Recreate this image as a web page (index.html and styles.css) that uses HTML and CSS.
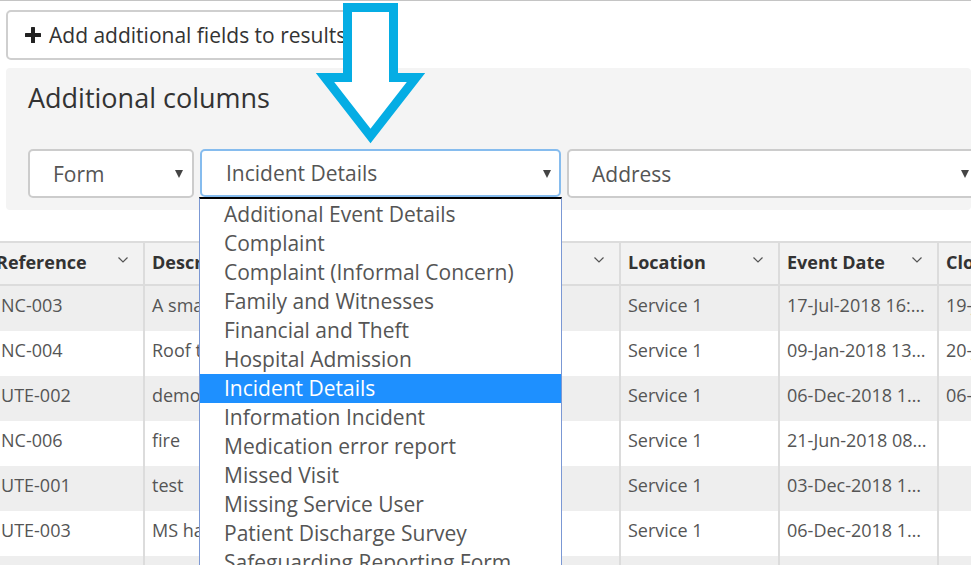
FILE: index.html
```html
<!DOCTYPE html>
<html lang="en">
<head>
<meta charset="utf-8">
<title>Additional columns</title>
<link rel="stylesheet" href="styles.css">
</head>
<body>
<div class="page">
  <div class="toolbar">
    <button class="add-btn" type="button">
      <svg class="plus" width="16" height="16" viewBox="0 0 16 16" aria-hidden="true"><rect x="6" y="0" width="4" height="16" rx="0.5"/><rect x="0" y="6" width="16" height="4" rx="0.5"/></svg>
      <span>Add additional fields to results</span>
    </button>
  </div>

  <section class="columns-panel">
    <h2 class="panel-title">Additional columns</h2>
    <div class="selects">
      <div class="select select-form"><span class="select-label">Form</span><span class="caret"></span></div>
      <div class="select-wrap">
        <div class="select select-focused"><span class="select-label">Incident Details</span><span class="caret"></span></div>
        <ul class="dropdown">
          <li>Additional Event Details</li>
          <li>Complaint</li>
          <li>Complaint (Informal Concern)</li>
          <li>Family and Witnesses</li>
          <li>Financial and Theft</li>
          <li>Hospital Admission</li>
          <li class="selected">Incident Details</li>
          <li>Information Incident</li>
          <li>Medication error report</li>
          <li>Missed Visit</li>
          <li>Missing Service User</li>
          <li>Patient Discharge Survey</li>
          <li>Safeguarding Reporting Form</li>
          <li>Staff Injury</li>
        </ul>
      </div>
      <div class="select select-address"><span class="select-label">Address</span><span class="caret"></span></div>
    </div>
  </section>

  <table class="results">
    <colgroup>
      <col class="col-ref">
      <col class="col-std">
      <col class="col-std">
      <col class="col-narrow">
      <col class="col-std">
      <col class="col-std">
      <col class="col-std">
    </colgroup>
    <thead>
      <tr>
        <th><div class="th-inner"><span class="th-label">Reference</span><svg class="chev" width="10" height="6" viewBox="0 0 10 6"><polyline points="0.5,0.5 5,5 9.5,0.5"/></svg></div></th>
        <th><div class="th-inner"><span class="th-label">Description</span><svg class="chev" width="10" height="6" viewBox="0 0 10 6"><polyline points="0.5,0.5 5,5 9.5,0.5"/></svg></div></th>
        <th><div class="th-inner"><span class="th-label">Type</span><svg class="chev" width="10" height="6" viewBox="0 0 10 6"><polyline points="0.5,0.5 5,5 9.5,0.5"/></svg></div></th>
        <th><div class="th-inner"><span class="th-label">Status</span><svg class="chev" width="10" height="6" viewBox="0 0 10 6"><polyline points="0.5,0.5 5,5 9.5,0.5"/></svg></div></th>
        <th><div class="th-inner"><span class="th-label">Location</span><svg class="chev" width="10" height="6" viewBox="0 0 10 6"><polyline points="0.5,0.5 5,5 9.5,0.5"/></svg></div></th>
        <th><div class="th-inner"><span class="th-label">Event Date</span><svg class="chev" width="10" height="6" viewBox="0 0 10 6"><polyline points="0.5,0.5 5,5 9.5,0.5"/></svg></div></th>
        <th><div class="th-inner"><span class="th-label">Closed Date</span><svg class="chev" width="10" height="6" viewBox="0 0 10 6"><polyline points="0.5,0.5 5,5 9.5,0.5"/></svg></div></th>
      </tr>
    </thead>
    <tbody>
      <tr><td>INC-003</td><td>A small fire in the kitchen</td><td>Fire</td><td>Open</td><td>Service 1</td><td>17-Jul-2018 16:45</td><td>19-Jul-2018</td></tr>
      <tr><td>INC-004</td><td>Roof tiles fell off</td><td>Damage</td><td>Open</td><td>Service 1</td><td>09-Jan-2018 13:20</td><td>20-Jan-2018</td></tr>
      <tr><td>IUTE-002</td><td>demo</td><td>Fall</td><td>Open</td><td>Service 1</td><td>06-Dec-2018 10:15</td><td>06-Dec-2018</td></tr>
      <tr><td>INC-006</td><td>fire</td><td>Fire</td><td>Open</td><td>Service 1</td><td>21-Jun-2018 08:30</td><td></td></tr>
      <tr><td>IUTE-001</td><td>test</td><td>Other</td><td>Open</td><td>Service 1</td><td>03-Dec-2018 11:00</td><td></td></tr>
      <tr><td>IUTE-003</td><td>MS had a fall</td><td>Fall</td><td>Open</td><td>Service 1</td><td>06-Dec-2018 14:22</td><td></td></tr>
      <tr><td>INC-007</td><td>test</td><td>Other</td><td>Open</td><td>Service 1</td><td>07-Dec-2018 09:10</td><td></td></tr>
    </tbody>
  </table>

  <svg class="pointer-arrow" width="140" height="150" viewBox="0 0 140 150" aria-hidden="true">
    <polygon points="47.5,6.5 93.5,6.5 93.5,76.5 116,76.5 70.5,135 25,76.5 47.5,76.5"/>
  </svg>
</div>
</body>
</html>
```

FILE: styles.css
```css
html, body {
  margin: 0;
  padding: 0;
  height: 565px;
  overflow: hidden;
  background: #fff;
}

body {
  font-family: "Open Sans", "Noto Sans", sans-serif;
  color: #333;
}

.page {
  position: relative;
  height: 565px;
  overflow: hidden;
  border-top: 1px solid #c4c4c4;
  box-sizing: border-box;
}

.toolbar {
  padding: 9px 0 0 6px;
}

.add-btn {
  display: flex;
  align-items: center;
  gap: 8px;
  height: 50px;
  box-sizing: border-box;
  padding: 0 18px 0 17px;
  background: #fff;
  border: 2px solid #cfcfcf;
  border-radius: 5px;
  font-family: "Open Sans", "Noto Sans", sans-serif;
  font-size: 21px;
  color: #333;
  cursor: pointer;
}

.plus {
  fill: #222;
  flex: none;
}

.columns-panel {
  margin: 8px 0 0 6px;
  padding: 12px 0 12px 22px;
  background: #f4f4f4;
  border-radius: 4px;
}

.panel-title {
  margin: 0 0 33px 0;
  font-size: 27px;
  line-height: 36px;
  font-weight: 400;
  color: #333;
}

.selects {
  display: flex;
  gap: 6px;
}

.select {
  flex: none;
  display: flex;
  align-items: center;
  height: 49px;
  box-sizing: border-box;
  padding: 0 9px 0 23px;
  background: #fff;
  border: 2px solid #cccccc;
  border-radius: 5px;
  font-size: 21px;
  color: #555;
}

.select-label {
  flex: 1;
  white-space: nowrap;
}

.caret {
  width: 0;
  height: 0;
  border-left: 4.5px solid transparent;
  border-right: 4.5px solid transparent;
  border-top: 8px solid #444;
  margin-top: 1px;
}

.select-form {
  width: 166px;
}

.select-wrap {
  flex: none;
  position: relative;
  width: 361px;
}

.select-focused {
  width: 361px;
  height: 48px;
  padding-left: 24px;
  padding-right: 8px;
  border-color: #86bcee;
}

.select-address {
  width: 413px;
}

.dropdown {
  position: absolute;
  z-index: 5;
  left: -1px;
  top: 48px;
  width: 363px;
  box-sizing: border-box;
  margin: 0;
  padding: 1px 0 0 0;
  list-style: none;
  background: #fff;
  border-top: 2px solid #000;
  border-left: 1px solid #7b98d4;
  border-right: 1px solid #7b98d4;
}

.dropdown li {
  height: 29px;
  line-height: 29px;
  padding-left: 24px;
  font-size: 21px;
  color: #555;
  white-space: nowrap;
}

.dropdown li.selected {
  background: #1e90ff;
  color: #fff;
}

.results {
  margin: 31px 0 0 -11px;
  width: 1107px;
  table-layout: fixed;
  border-collapse: separate;
  border-spacing: 0;
  font-size: 18px;
  line-height: 24px;
}

.col-ref {
  width: 154px;
}

.col-std {
  width: 159px;
}

.col-narrow {
  width: 158px;
}

.results th,
.results td {
  border-left: 2px solid #dcdcdc;
  text-align: left;
  white-space: nowrap;
  overflow: hidden;
  text-overflow: ellipsis;
}

.results th:first-child,
.results td:first-child {
  border-left: 0;
}

.results th {
  background: #f2f2f2;
  border-top: 2px solid #dcdcdc;
  border-bottom: 2px solid #dcdcdc;
  padding: 7px 8px 10px 7px;
  font-weight: 700;
  color: #333;
}

.th-inner {
  display: flex;
  align-items: flex-start;
}

.th-label {
  flex: 1;
  overflow: hidden;
}

.chev {
  flex: none;
  margin: 7px 7px 0 4px;
  fill: none;
  stroke: #555;
  stroke-width: 1.2;
}

.results td {
  padding: 7px 9px 14px 7px;
  color: #555;
}

.results tbody tr:nth-child(odd) td {
  background: #eeeeee;
}

.results tbody tr:nth-child(even) td {
  background: #fff;
}

.pointer-arrow {
  position: absolute;
  left: 300px;
  top: 0;
  z-index: 6;
}

.pointer-arrow polygon {
  fill: #fff;
  stroke: #05ade4;
  stroke-width: 9;
  stroke-linejoin: miter;
}
```
